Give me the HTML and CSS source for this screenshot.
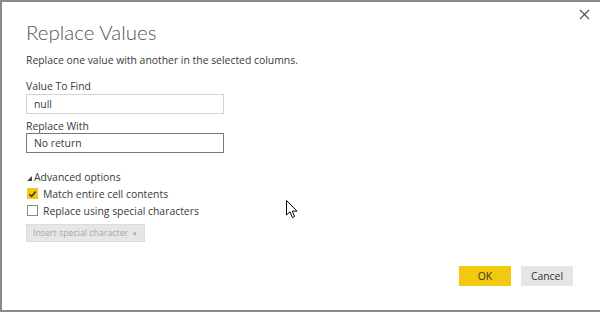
FILE: index.html
```html
<!DOCTYPE html>
<html lang="en">
<head>
  <meta charset="UTF-8" />
  <title>Replace Values</title>
  <link rel="stylesheet" href="styles.css">
</head>
<body>

  <div class="dialog">
    <button class="close" aria-label="Close">
      <svg width="11" height="11" viewBox="0 0 11 11"><path d="M1 1L10 10M10 1L1 10" stroke="#555" stroke-width="1.2" fill="none"/></svg>
    </button>

    <h1>Replace Values</h1>
    <p class="intro">Replace one value with another in the selected columns.</p>

    <div class="field">
      <label>Value To Find</label>
      <div class="input">null</div>
    </div>

    <div class="field">
      <label>Replace With</label>
      <div class="input active">No return</div>
    </div>

    <!-- Advanced section -->
    <div class="advanced">
      <div class="adv-head"><span class="tri"></span>Advanced options</div>
      <div class="check-row">
        <span class="box checked">
          <svg width="10" height="10" viewBox="0 0 10 10"><path d="M1.5 5.2L4 7.6L8.6 2.2" stroke="#333" stroke-width="1.6" fill="none"/></svg>
        </span>
        Match entire cell contents
      </div>
      <div class="check-row">
        <span class="box"></span>
        Replace using special characters
      </div>
      <div class="insert-btn">Insert special character <span class="caret">&#9662;</span></div>
    </div>

    <div class="footer">
      <button class="btn ok">OK</button>
      <button class="btn">Cancel</button>
    </div>

    <svg class="cursor" width="12" height="19" viewBox="0 0 12 19"><path d="M0.5 0.5L0.5 15L4 11.8L6.4 17.6L8.6 16.6L6.3 11.1L11 11.1Z" fill="#fff" stroke="#000" stroke-width="1"/></svg>
  </div>

</body>
</html>
```

FILE: styles.css
```css
body {
  margin: 0;
  font-family: 'Open Sans', 'Liberation Sans', sans-serif;
  color: #3a3a3a;
  background: #fff;
}

.dialog {
  position: relative;
  box-sizing: border-box;
  width: 600px;
  height: 312px;
  border-top: 2px solid #8a8a8a;
  border-left: 2px solid #8a8a8a;
  border-bottom: 2px solid #8a8a8a;
  padding: 14px 24px 0 24px;
  display: flex;
  flex-direction: column;
}

.close {
  position: absolute;
  top: 6px;
  right: 10px;
  border: none;
  background: none;
  padding: 0;
  cursor: pointer;
}

h1 {
  margin: 0;
  font-family: 'Lato', 'Open Sans', sans-serif;
  font-size: 20.5px;
  font-weight: 300;
  color: #555;
  line-height: 32px;
}

.intro {
  margin: 5px 0 11px;
  font-size: 10.4px;
  line-height: 15px;
}

.field label {
  display: block;
  font-size: 10.4px;
  line-height: 14px;
  margin-bottom: 1px;
}

.field + .field {
  margin-top: 5px;
}

.field + .field label {
  margin-bottom: 0;
}

.input {
  box-sizing: border-box;
  width: 198px;
  height: 20px;
  border: 1px solid #d4d4d4;
  padding: 0 7px;
  font-size: 10.4px;
  line-height: 18px;
}

.input.active {
  border-color: #7a7a7a;
}

.advanced {
  margin-top: 17px;
  font-size: 10.4px;
}

.adv-head {
  line-height: 15px;
  display: flex;
  align-items: center;
}

.tri {
  width: 0;
  height: 0;
  border-left: 5px solid transparent;
  border-bottom: 5px solid #444;
  margin: 2px 2px 0 1px;
}

.check-row {
  display: flex;
  align-items: center;
  gap: 5px;
  height: 17px;
  margin-left: 1px;
}

.box {
  box-sizing: border-box;
  width: 11px;
  height: 11px;
  border: 1px solid #888;
  display: flex;
  align-items: center;
  justify-content: center;
}

.box.checked {
  background: #f2c811;
  border-color: #f2c811;
}

.insert-btn {
  margin-top: 5px;
  display: inline-flex;
  align-items: center;
  align-self: flex-start;
  height: 18px;
  box-sizing: border-box;
  background: #e6e6e6;
  border: 1px solid #dcdcdc;
  color: #a6a6a6;
  font-size: 8.8px;
  padding: 0 7px 0 6px;
  white-space: nowrap;
}

.caret {
  font-size: 7px;
  margin-left: 5px;
}

.footer {
  margin-top: auto;
  margin-bottom: 24px;
  display: flex;
  justify-content: flex-end;
  gap: 10px;
  margin-right: 3px;
}

.btn {
  width: 52px;
  height: 20px;
  border: none;
  background: #e6e6e6;
  font-family: inherit;
  font-size: 10.4px;
  color: #333;
  padding: 0;
}

.btn.ok {
  background: #f2c811;
}

.cursor {
  position: absolute;
  left: 284px;
  top: 198px;
}
```
